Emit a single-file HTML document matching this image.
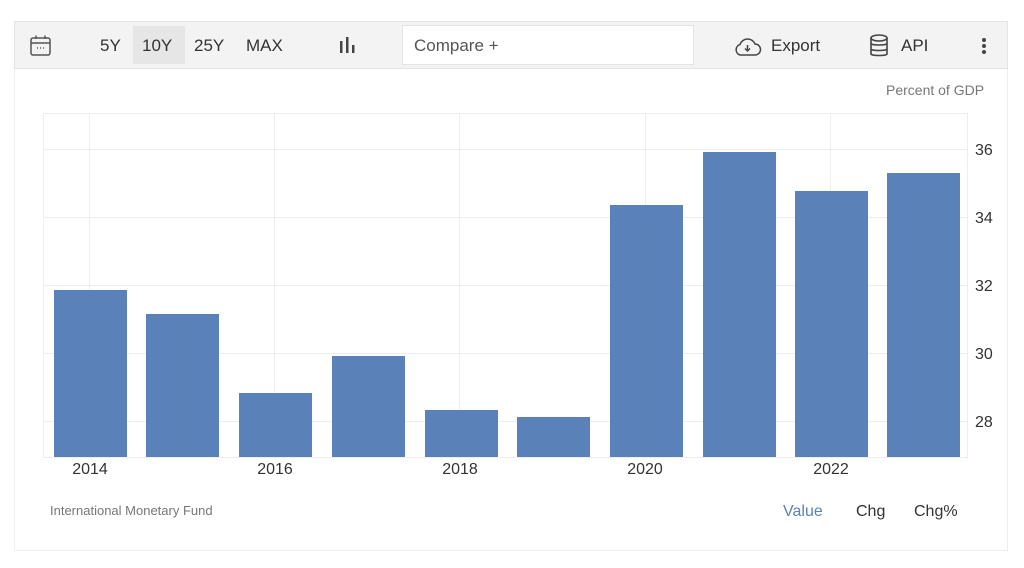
<!DOCTYPE html>
<html><head><meta charset="utf-8"><style>
*{margin:0;padding:0;box-sizing:border-box}
body{width:1024px;height:568px;background:#fff;font-family:"Liberation Sans",Arial,sans-serif;position:relative;overflow:hidden}
.a{position:absolute}
.tb{left:14px;top:21px;width:994px;height:48px;background:#f3f3f3;border:1px solid #e4e4e4}
.panel{left:14px;top:68px;width:994px;height:483px;border:1px solid #eee;border-top:none}
.t{font-size:17px;color:#333;top:36px}
</style></head><body>
<div class="a panel"></div>
<div class="a tb"></div>
<svg class="a" style="left:29px;top:34px" width="24" height="24" viewBox="0 0 24 24" fill="none" stroke="#555" stroke-width="1.5"><rect x="2" y="4" width="19" height="17" rx="2"/><line x1="2" y1="9" x2="21" y2="9"/><line x1="7" y1="1.5" x2="7" y2="5"/><line x1="16" y1="1.5" x2="16" y2="5"/><line x1="8" y1="14" x2="9" y2="14"/><line x1="11" y1="14" x2="12" y2="14"/><line x1="14" y1="14" x2="15" y2="14"/></svg>
<div class="a" style="left:133px;top:26px;width:52px;height:38px;background:#e6e6e6"></div>
<div class="a t" style="left:100px">5Y</div>
<div class="a t" style="left:142px">10Y</div>
<div class="a t" style="left:194px">25Y</div>
<div class="a t" style="left:246px">MAX</div>
<svg class="a" style="left:338px;top:36px" width="20" height="20" viewBox="0 0 20 20" fill="#444"><rect x="2" y="5" width="2.5" height="12"/><rect x="8" y="1" width="2.5" height="16"/><rect x="14" y="9" width="2.5" height="8"/></svg>
<div class="a" style="left:402px;top:25px;width:292px;height:40px;background:#fff;border:1px solid #e4e4e4"></div>
<div class="a" style="left:414px;top:36px;font-size:17px;color:#555">Compare +</div>
<svg class="a" style="left:732px;top:36px" width="30" height="22" viewBox="0 0 30 22" fill="none" stroke="#444" stroke-width="1.5"><path d="M8 19 H23 A5.5 5.5 0 0 0 23 8 A8 8 0 0 0 8 8.5 A5.5 5.5 0 0 0 8 19 Z"/><path d="M15.5 9 V15 M13 12.5 L15.5 15 L18 12.5"/></svg>
<div class="a t" style="left:771px">Export</div>
<svg class="a" style="left:868px;top:33px" width="22" height="26" viewBox="0 0 22 26" fill="none" stroke="#444" stroke-width="1.6"><ellipse cx="11" cy="5" rx="8" ry="3"/><path d="M3 5 V21 C3 23 19 23 19 21 V5 M3 10.5 C3 12.5 19 12.5 19 10.5 M3 16 C3 18 19 18 19 16"/></svg>
<div class="a t" style="left:901px">API</div>
<svg class="a" style="left:980px;top:37px" width="8" height="20"><circle cx="4" cy="3" r="2" fill="#444"/><circle cx="4" cy="9" r="2" fill="#444"/><circle cx="4" cy="15" r="2" fill="#444"/></svg>
<div class="a" style="left:886px;top:82px;font-size:14px;color:#777">Percent of GDP</div>
<svg class="a" style="left:0;top:0" width="1024" height="568">
<g stroke="#eee" stroke-width="1">
<rect x="43.5" y="113.5" width="924" height="344" fill="none"/>
<line x1="89.5" y1="113" x2="89.5" y2="457"/><line x1="274.5" y1="113" x2="274.5" y2="457"/><line x1="459.5" y1="113" x2="459.5" y2="457"/><line x1="645.5" y1="113" x2="645.5" y2="457"/><line x1="830.5" y1="113" x2="830.5" y2="457"/>
<line x1="43" y1="149.5" x2="968" y2="149.5"/><line x1="43" y1="217.5" x2="968" y2="217.5"/><line x1="43" y1="285.5" x2="968" y2="285.5"/><line x1="43" y1="353.5" x2="968" y2="353.5"/><line x1="43" y1="421.5" x2="968" y2="421.5"/>
</g>
<g fill="#5a81b8">
<rect x="54" y="290" width="73" height="167"/><rect x="146" y="314" width="73" height="143"/><rect x="239" y="393" width="73" height="64"/><rect x="332" y="356" width="73" height="101"/><rect x="425" y="410" width="73" height="47"/><rect x="517" y="417" width="73" height="40"/><rect x="610" y="205" width="73" height="252"/><rect x="703" y="152" width="73" height="305"/><rect x="795" y="191" width="73" height="266"/><rect x="887" y="173" width="73" height="284"/>
</g>
<g font-family="Liberation Sans,Arial,sans-serif" font-size="16" fill="#333">
<text x="975" y="155">36</text><text x="975" y="223">34</text><text x="975" y="291">32</text><text x="975" y="359">30</text><text x="975" y="427">28</text>
<text x="90" y="474" text-anchor="middle">2014</text><text x="275" y="474" text-anchor="middle">2016</text><text x="460" y="474" text-anchor="middle">2018</text><text x="645" y="474" text-anchor="middle">2020</text><text x="831" y="474" text-anchor="middle">2022</text>
</g>
</svg>
<div class="a" style="left:50px;top:503px;font-size:13px;color:#777">International Monetary Fund</div>
<div class="a" style="left:783px;top:503px;font-size:16px;color:#5a81b8">Value</div>
<div class="a" style="left:856px;top:503px;font-size:16px;color:#333">Chg</div>
<div class="a" style="left:914px;top:503px;font-size:16px;color:#333">Chg%</div>
</body></html>
